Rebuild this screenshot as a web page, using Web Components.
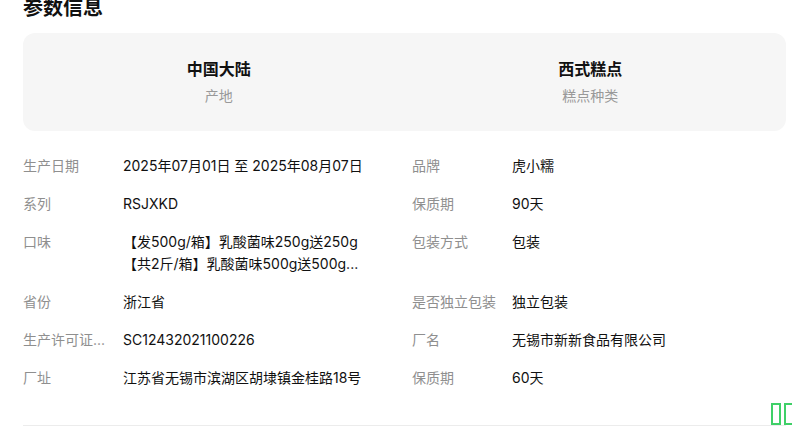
<!DOCTYPE html>
<html lang="zh">
<head>
<meta charset="utf-8">
<title>参数信息</title>
<style>
  html, body { margin: 0; height: 426px; overflow: hidden; background: #fff; }
  body { font-family: Inter, "Noto Sans CJK SC", sans-serif; color: #111; }
</style>
</head>
<body>
<param-panel>
  <key-fact slot="facts" value="中国大陆" label="产地"></key-fact>
  <key-fact slot="facts" value="西式糕点" label="糕点种类"></key-fact>
  <param-row label="生产日期">2025年07月01日 至 2025年08月07日</param-row>
  <param-row label="品牌">虎小糯</param-row>
  <param-row label="系列">RSJXKD</param-row>
  <param-row label="保质期">90天</param-row>
  <param-row label="口味">【发500g/箱】乳酸菌味250g送250g<br>【共2斤/箱】乳酸菌味500g送500g...</param-row>
  <param-row label="包装方式">包装</param-row>
  <param-row label="省份">浙江省</param-row>
  <param-row label="是否独立包装">独立包装</param-row>
  <param-row label="生产许可证...">SC12432021100226</param-row>
  <param-row label="厂名">无锡市新新食品有限公司</param-row>
  <param-row label="厂址">江苏省无锡市滨湖区胡埭镇金桂路18号</param-row>
  <param-row label="保质期">60天</param-row>
</param-panel>
<script>
class ParamPanel extends HTMLElement {
  constructor() {
    super();
    this.attachShadow({ mode: 'open' });
  }

  connectedCallback() {
    this.shadowRoot.innerHTML = `
      <style>
        :host {
          display: block;
          position: relative;
          height: 426px;
          box-sizing: border-box;
          padding: 0 6px 0 23px;
          overflow: hidden;
        }
        h2 {
          margin: -6px 0 11px;
          font-size: 20px;
          line-height: 28px;
          font-weight: 700;
          color: #111;
        }
        .facts {
          display: grid;
          grid-template-columns: 1fr 1fr;
          box-sizing: border-box;
          height: 98px;
          padding: 0 10px;
          background: #f6f6f6;
          border-radius: 12px;
        }
        .rows {
          display: grid;
          grid-template-columns: 389px 374px;
          row-gap: 16px;
          margin-top: 24px;
        }
        .rule {
          position: absolute;
          left: 23px;
          right: 6px;
          top: 425px;
          height: 1px;
          background: #ececec;
        }
        .tofu {
          position: absolute;
          top: 403px;
          width: 6px;
          height: 18px;
          border: 2px solid #3fd068;
          box-sizing: content-box;
        }
      </style>
      <h2>参数信息</h2>
      <div class="facts"><slot name="facts"></slot></div>
      <div class="rows"><slot></slot></div>
      <div class="rule"></div>
      <div class="tofu" style="left:771px"></div>
      <div class="tofu" style="left:784px"></div>
    `;
  }
}

class KeyFact extends HTMLElement {
  constructor() {
    super();
    this.attachShadow({ mode: 'open' });
  }

  connectedCallback() {
    this.shadowRoot.innerHTML = `
      <style>
        :host {
          display: flex;
          flex-direction: column;
          align-items: center;
          padding-top: 24px;
        }
        .value { font-size: 16px; line-height: 24px; font-weight: 700; color: #111; }
        .label { font-size: 14px; line-height: 20px; margin-top: 5px; color: #999; }
      </style>
      <div class="value">${this.getAttribute('value')}</div>
      <div class="label">${this.getAttribute('label')}</div>
    `;
  }
}

class ParamRow extends HTMLElement {
  constructor() {
    super();
    this.attachShadow({ mode: 'open' });
  }

  connectedCallback() {
    this.shadowRoot.innerHTML = `
      <style>
        :host {
          display: flex;
          gap: 16px;
          font-size: 14px;
          line-height: 22px;
        }
        .label { flex: 0 0 84px; color: #8f8f8f; white-space: nowrap; }
        .value { flex: 1; color: #111; white-space: nowrap; }
      </style>
      <div class="label">${this.getAttribute('label')}</div>
      <div class="value"><slot></slot></div>
    `;
  }
}

customElements.define('param-panel', ParamPanel);
customElements.define('key-fact', KeyFact);
customElements.define('param-row', ParamRow);
</script>
</body>
</html>
